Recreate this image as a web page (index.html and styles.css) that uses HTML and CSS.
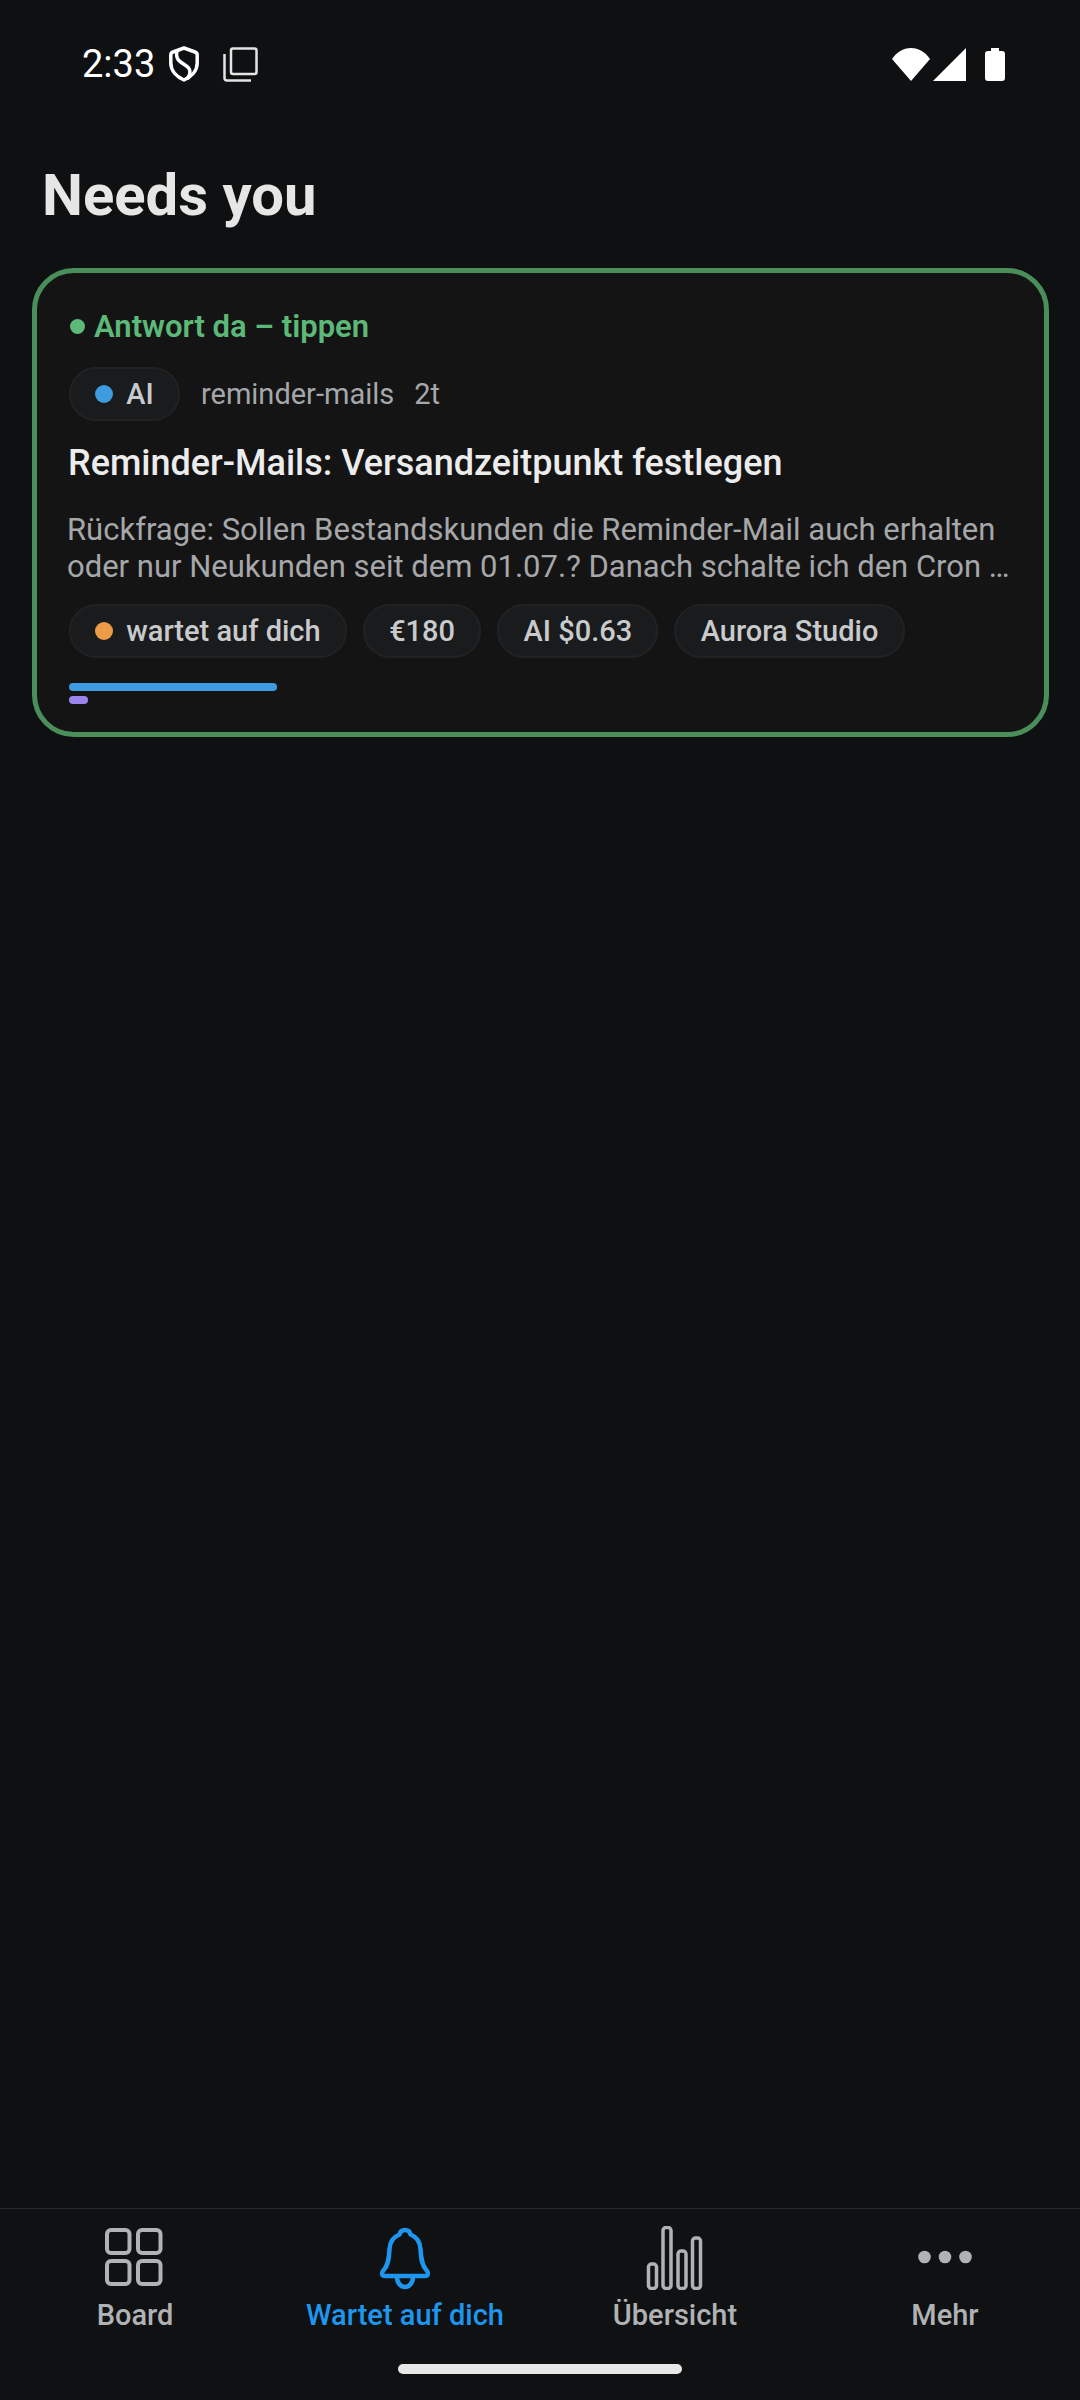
FILE: index.html
```html
<!DOCTYPE html>
<html lang="de">
<head>
    <meta charset="UTF-8">
    <meta name="viewport" content="width=device-width, initial-scale=1.0">
    <title>Needs you</title>
    <link rel="stylesheet" href="styles.css">
</head>
<body>
    <div class="statusbar">
        <div class="status-left">
            <span class="clock">2:33</span>
            <svg class="shield" width="30" height="36" viewBox="0 0 30 36" fill="none" stroke="#fff" stroke-width="3.500">
                <path d="M15 2 L26 6 C27.500 6.500 28.200 7.500 28.200 9 V17 C28.200 25 22 31 15 34 C8 31 1.800 25 1.800 17 V9 C1.800 7.500 2.500 6.500 4 6 Z" stroke-linejoin="round"/>
                <path d="M8 5 C6 13 11 16 16 19 C21 22 23 26 18 33"/>
            </svg>
            <svg class="copy" width="35" height="35" viewBox="0 0 35 35" fill="none" stroke="#e4e4e4" stroke-width="2.500">
                <rect x="8" y="1.500" width="25.500" height="25.500" rx="2"/>
                <path d="M1.500 7 V31 C1.500 32.500 2.500 33.500 4 33.500 H28"/>
            </svg>
        </div>
        <div class="status-right">
            <svg width="38" height="33" viewBox="0 0 38 33"><path d="M0 11 C5 4 11 0 19 0 C27 0 33 4 38 11 L19 33 Z" fill="#fff"/></svg>
            <svg width="33" height="33" viewBox="0 0 33 33"><path d="M33 0 V33 H0 Z" fill="#fff"/></svg>
            <svg class="battery" width="20" height="33" viewBox="0 0 20 33"><path d="M6 0 H14 V3 H17 C19 3 20 4 20 6 V30 C20 32 19 33 17 33 H3 C1 33 0 32 0 30 V6 C0 4 1 3 3 3 H6 Z" fill="#fff"/></svg>
        </div>
    </div>

    <main class="content">
        <h1 class="page-title">Needs you</h1>

        <div class="card">
            <div class="notice"><span class="notice-dot"></span>Antwort da – tippen</div>
            <div class="meta">
                <span class="chip"><span class="dot dot-blue"></span>AI</span>
                <span class="slug">reminder-mails</span>
                <span class="age">2t</span>
            </div>
            <h2 class="card-title">Reminder-Mails: Versandzeitpunkt festlegen</h2>
            <p class="card-text">Rückfrage: Sollen Bestandskunden die Reminder-Mail auch erhalten<br>oder nur Neukunden seit dem 01.07.? Danach schalte ich den Cron …</p>
            <div class="chips">
                <span class="chip"><span class="dot dot-orange"></span>wartet auf dich</span>
                <span class="chip">€180</span>
                <span class="chip">AI $0.63</span>
                <span class="chip">Aurora Studio</span>
            </div>
            <div class="bars">
                <div class="bar bar-blue" style="width: 208px"></div>
                <div class="bar bar-purple" style="width: 19px"></div>
            </div>
        </div>
    </main>

    <nav class="tabbar">
        <div class="tabs">
            <div class="tab">
                <svg width="60" height="64" viewBox="0 0 60 64" fill="none" stroke="currentColor" stroke-width="4">
                    <rect x="2" y="4" width="22.500" height="23" rx="4"/>
                    <rect x="33" y="4" width="22.500" height="23" rx="4"/>
                    <rect x="2" y="35" width="22.500" height="23" rx="4"/>
                    <rect x="33" y="35" width="22.500" height="23" rx="4"/>
                </svg>
                <span>Board</span>
            </div>
            <div class="tab tab-active">
                <svg width="60" height="64" viewBox="0 0 60 64" fill="none" stroke="currentColor" stroke-width="4.500" stroke-linejoin="round">
                    <path d="M30 4 C33 4 35 6 35.500 8.500 C42 11 45 16 45.500 23 C46 33 47 40 52 45 C54 47.500 53 50 50 50 H10 C7 50 6 47.500 8 45 C13 40 14 33 14.500 23 C15 16 18 11 24.500 8.500 C25 6 27 4 30 4 Z"/>
                    <path d="M22 51 C22 57 26 61 30 61 C34 61 38 57 38 51"/>
                </svg>
                <span>Wartet auf dich</span>
            </div>
            <div class="tab">
                <svg width="60" height="64" viewBox="0 0 60 64" fill="none" stroke="currentColor" stroke-width="3.500">
                    <rect x="3.500" y="38" width="8" height="24.500" rx="3"/>
                    <rect x="18" y="1.500" width="8" height="61" rx="3"/>
                    <rect x="33" y="25" width="8" height="37.500" rx="3"/>
                    <rect x="47.500" y="12" width="8" height="50.500" rx="3"/>
                </svg>
                <span>Übersicht</span>
            </div>
            <div class="tab">
                <svg width="60" height="64" viewBox="0 0 60 64" fill="currentColor">
                    <circle cx="9.500" cy="31" r="6.300"/>
                    <circle cx="30" cy="31" r="6.300"/>
                    <circle cx="50.500" cy="31" r="6.300"/>
                </svg>
                <span>Mehr</span>
            </div>
        </div>
        <div class="home-bar"></div>
    </nav>
</body>
</html>
```

FILE: styles.css
```css
html, body {
    margin: 0;
    height: 2400px;
}

body {
    display: flex;
    flex-direction: column;
    background-color: #0e1012;
    font-family: Roboto, "Noto Sans", sans-serif;
    overflow: hidden;
}

.statusbar {
    display: flex;
    justify-content: space-between;
    align-items: center;
    height: 64px;
    padding: 32px 75px 0 82px;
    color: #fff;
}

.status-left {
    display: flex;
    align-items: center;
}

.status-right {
    display: flex;
    align-items: center;
    gap: 3px;
}

.clock {
    font-size: 38px;
    width: 87px;
}

.copy {
    margin-left: 24px;
}

.battery {
    margin-left: 16px;
}

.content {
    flex: 1;
    padding: 0 31px 0 32px;
}

.page-title {
    margin: 63px 0 0 10px;
    font-size: 58px;
    line-height: 72px;
    font-weight: 700;
    color: #e6e6e6;
}

.card {
    margin-top: 37px;
    height: 469px;
    box-sizing: border-box;
    padding: 31px 32px 0 32px;
    background-color: #141415;
    border: 5px solid #4a8f5a;
    border-radius: 42px;
}

.notice {
    display: flex;
    align-items: center;
    height: 44px;
    font-size: 31px;
    font-weight: 600;
    color: #5cb978;
}

.notice-dot {
    width: 15px;
    height: 15px;
    margin: 0 9px 0 1px;
    border-radius: 50%;
    background-color: #5cb978;
}

.meta {
    display: flex;
    align-items: center;
    margin-top: 19px;
    font-size: 29px;
    color: #a5a7a9;
}

.slug {
    margin-left: 21px;
}

.age {
    margin-left: 20px;
}

.chip {
    display: flex;
    align-items: center;
    height: 54px;
    box-sizing: border-box;
    padding: 0 24.250px;
    border: 2px solid #202224;
    border-radius: 27px;
    background-color: #191b1d;
    font-size: 29px;
    font-weight: 500;
    color: #c9cacc;
}

.dot {
    width: 18px;
    height: 18px;
    margin-right: 13px;
    border-radius: 50%;
}

.dot-blue {
    background-color: #3d9bdf;
}

.dot-orange {
    background-color: #ec9c47;
}

.card-title {
    margin: 20px 0 0 -1px;
    font-size: 36px;
    line-height: 44px;
    font-weight: 500;
    color: #ececec;
}

.card-text {
    margin: 26px 0 0 -2px;
    font-size: 31px;
    line-height: 37px;
    color: #a5a7a9;
    white-space: nowrap;
}

.chips {
    display: flex;
    gap: 16px;
    margin-top: 19px;
}

.bars {
    display: flex;
    flex-direction: column;
    gap: 5px;
    margin-top: 25px;
}

.bar {
    height: 8px;
    border-radius: 4px;
}

.bar-blue {
    background-color: #3d9bdf;
}

.bar-purple {
    background-color: #9b85ec;
}

.tabbar {
    height: 192px;
    box-sizing: border-box;
    border-top: 1px solid #26282a;
    background-color: #101112;
}

.tabs {
    display: grid;
    grid-template-columns: repeat(4, 1fr);
    padding-top: 17px;
}

.tab {
    display: flex;
    flex-direction: column;
    align-items: center;
    font-size: 29px;
    line-height: 36px;
    font-weight: 500;
    color: #b0b2b4;
}

.tab span {
    margin-top: 7px;
}

.tab-active {
    color: #1f96ee;
}

.home-bar {
    width: 284px;
    height: 10px;
    margin: 31px auto 0;
    border-radius: 5px;
    background-color: #e8e8e8;
}
```
